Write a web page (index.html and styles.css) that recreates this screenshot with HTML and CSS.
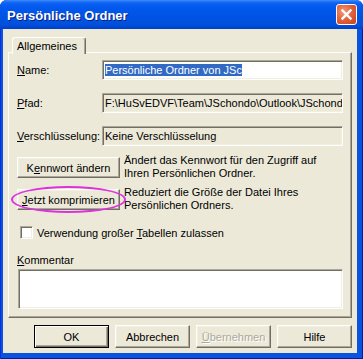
FILE: index.html
```html
<!DOCTYPE html>
<html lang="de">
<head>
    <meta charset="UTF-8">
    <title>Persönliche Ordner</title>
    <link rel="stylesheet" href="styles.css">
</head>
<body>
    <div class="window">
        <div class="titlebar">
            <span class="title">Persönliche Ordner</span>
            <span class="close">
                <svg width="19" height="19" viewBox="0 0 19 19">
                    <path d="M5.5 5.5 L13.5 13.5 M13.5 5.5 L5.5 13.5" stroke="#fff" stroke-width="2.4" stroke-linecap="square"/>
                </svg>
            </span>
        </div>

        <div class="client">
            <div class="tabs">
                <div class="tab">Allgemeines</div>
            </div>

            <div class="panel">
                <div class="fields">
                    <label><u>N</u>ame:</label>
                    <div class="edit white"><span class="sel">Persönliche Ordner von JSc</span></div>
                    <label><u>P</u>fad:</label>
                    <div class="edit">F:\HuSvEDVF\Team\JSchondo\Outlook\JSchondo.pst</div>
                    <label><u>V</u>erschlüsselung:</label>
                    <div class="edit">Keine Verschlüsselung</div>
                </div>

                <div class="action">
                    <button class="btn">K<u>e</u>nnwort ändern</button>
                    <p>Ändert das Kennwort für den Zugriff auf<br>Ihren Persönlichen Ordner.</p>
                </div>
                <div class="action">
                    <div class="mark">
                        <button class="btn"><u>J</u>etzt komprimieren</button>
                        <span class="ring"></span>
                    </div>
                    <p>Reduziert die Größe der Datei Ihres<br>Persönlichen Ordners.</p>
                </div>

                <div class="check">
                    <span class="box"></span>
                    <span>Verwendung großer <u>T</u>abellen zulassen</span>
                </div>

                <div class="comment-label"><u>K</u>ommentar</div>
                <div class="edit white memo"></div>
            </div>

            <div class="buttons">
                <button class="btn dlg default">OK</button>
                <button class="btn dlg">Abbrechen</button>
                <button class="btn dlg disabled"><u>Ü</u>bernehmen</button>
                <button class="btn dlg">Hilfe</button>
            </div>
        </div>
    </div>
</body>
</html>
```

FILE: styles.css
```css
* {
    box-sizing: border-box;
}

body {
    margin: 0;
    background: #ffffff;
    font-family: "Liberation Sans", Arial, sans-serif;
    font-size: 11px;
    color: #000000;
}

/* Fensterrahmen im XP-Stil */
.window {
    width: 363px;
    height: 359px;
    display: flex;
    flex-direction: column;
    background: #0a53e0;
    border-radius: 7px 7px 0 0;
    box-shadow: inset 1px 0 #0831d9, inset -1px -1px #001ea0;
    overflow: hidden;
}

.titlebar {
    height: 29px;
    flex: none;
    display: flex;
    align-items: center;
    justify-content: space-between;
    padding: 0 6px 0 7px;
    background: linear-gradient(#3d8ffb 0, #1a6af4 2px, #0a5ff0 4px, #0058ee 8px, #0054e3 55%, #0050dc 85%, #003fc8 100%);
}

.title {
    color: #ffffff;
    font-weight: bold;
    font-size: 13px;
    padding-top: 2px;
    text-shadow: 1px 1px #0a1e80;
}

.close {
    width: 21px;
    height: 21px;
    display: flex;
    align-items: center;
    justify-content: center;
    border: 1px solid #ffffff;
    border-radius: 3px;
    background: radial-gradient(circle at 35% 35%, #f29a7c 0, #e3643f 45%, #c8401c 100%);
}

.client {
    flex: 1;
    margin: 0 6px 6px 3px;
    padding: 8px 5px 0;
    background: #ece9d8;
    display: flex;
    flex-direction: column;
}

/* Registerkarte */
.tabs {
    height: 15px;
    display: flex;
    padding-left: 4px;
    position: relative;
    z-index: 1;
}

.tab {
    height: 17px;
    padding: 2px 8px 0 4px;
    background: #ece9d8;
    border: 1px solid;
    border-color: #ffffff #716f64 transparent #ffffff;
    border-bottom: none;
    border-radius: 3px 3px 0 0;
    box-shadow: inset -1px 0 #aca899;
}

.panel {
    height: 266px;
    flex: none;
    padding: 7px 8px 0 8px;
    border: 1px solid;
    border-color: #ffffff #716f64 #716f64 #ffffff;
    box-shadow: inset -1px -1px #aca899;
}

.fields {
    display: grid;
    grid-template-columns: 85px 1fr;
    grid-auto-rows: 20px;
    row-gap: 13px;
    align-items: center;
}

.edit {
    height: 20px;
    padding: 2px 2px 0;
    line-height: 14px;
    white-space: nowrap;
    overflow: hidden;
    border: 1px solid;
    border-color: #aca899 #ffffff #ffffff #aca899;
    box-shadow: inset 1px 1px #716f64, inset -1px -1px #f1efe2;
}

.edit.white {
    background: #ffffff;
}

.sel {
    background: #316ac5;
    color: #ffffff;
}

.action {
    display: flex;
    align-items: flex-start;
    gap: 4px;
    height: 21px;
    margin-top: 11px;
}

.action p {
    margin: -3px 0 0;
    line-height: 13px;
}

.mark {
    position: relative;
}

/* Markierung (Ellipse) um den Button */
.ring {
    position: absolute;
    left: -6px;
    top: -3px;
    width: 115px;
    height: 27px;
    border: 2px solid #dd33dd;
    border-radius: 50%;
    pointer-events: none;
}

.btn {
    width: 103px;
    height: 21px;
    padding: 0;
    font: inherit;
    color: #000000;
    background: #ece9d8;
    border: 1px solid;
    border-color: #ffffff #716f64 #716f64 #ffffff;
    box-shadow: inset -1px -1px #aca899, inset 1px 1px #f1efe2;
}

.check {
    display: flex;
    align-items: center;
    gap: 4px;
    height: 13px;
    margin: 16px 0 0 3px;
}

.box {
    width: 13px;
    height: 13px;
    background: #ffffff;
    border: 1px solid;
    border-color: #aca899 #ffffff #ffffff #aca899;
    box-shadow: inset 1px 1px #716f64, inset -1px -1px #f1efe2;
}

.comment-label {
    margin-top: 15px;
    line-height: 13px;
}

.memo {
    height: 40px;
    margin: 2px 0 0 1px;
}

.buttons {
    display: flex;
    justify-content: flex-end;
    gap: 6px;
    margin-top: 7px;
}

.btn.dlg {
    width: 75px;
    height: 23px;
}

.btn.default {
    border-color: #000000;
    box-shadow: inset 1px 1px #ffffff, inset -1px -1px #716f64, inset -2px -2px #aca899;
}

.btn.disabled {
    color: #aca899;
    text-shadow: 1px 1px #ffffff;
}
```
